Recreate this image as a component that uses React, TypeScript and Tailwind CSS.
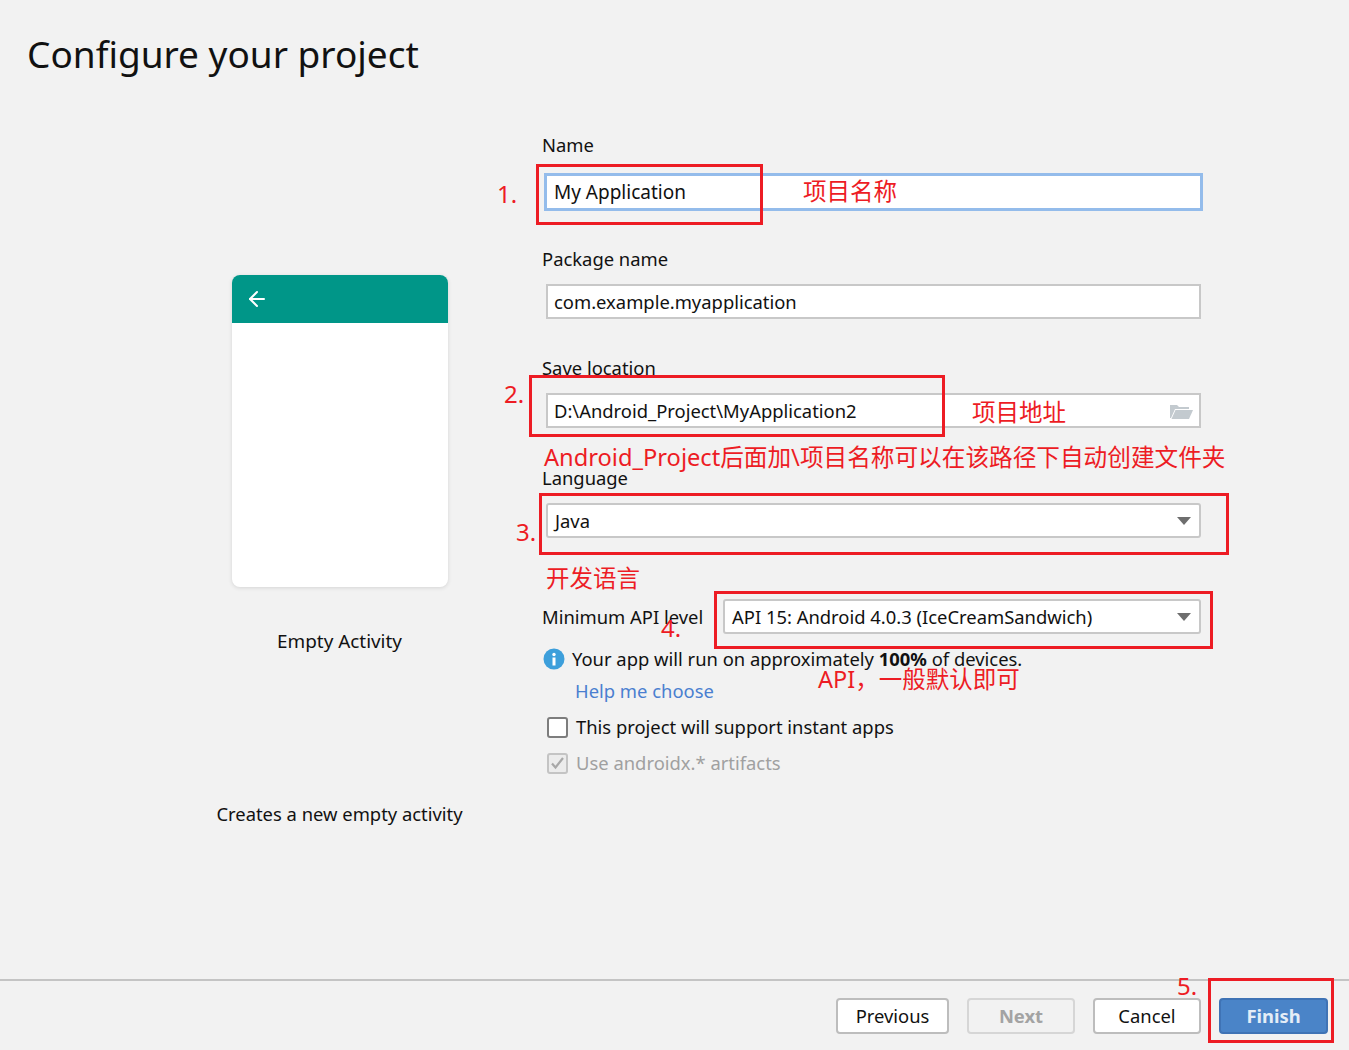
import { ArrowLeft } from 'lucide-react';

const uiFont = "font-['Noto_Sans','Open_Sans',sans-serif]";

function Label({ text, className = '' }: { text: string; className?: string }) {
  return <div className={`h-[26px] text-[18.4px] leading-[26px] text-[#111] ${className}`}>{text}</div>;
}

function Field({ value, children }: { value: string; children?: React.ReactNode }) {
  return (
    <div className="ml-1 flex h-[35px] w-[655px] items-center justify-between border-2 border-[#c8c8c8] bg-white pl-[6px] pr-[6px] text-[18.4px] text-[#111]">
      <span>{value}</span>
      {children}
    </div>
  );
}

function Caret() {
  return <div className="mr-[2px] h-0 w-0 border-x-[7px] border-t-[8px] border-x-transparent border-t-[#6e6e6e]" />;
}

function Select({ value, className = '' }: { value: string; className?: string }) {
  return (
    <div className={`flex h-[35px] items-center justify-between rounded-[3px] border-2 border-[#c8c8c8] bg-white pl-[7px] pr-[6px] text-[18.4px] text-[#111] ${className}`}>
      <span>{value}</span>
      <Caret />
    </div>
  );
}

function Button({ label, className = '' }: { label: string; className?: string }) {
  return (
    <div className={`flex h-[36px] items-center justify-center rounded-[4px] border-2 text-[18.4px] ${className}`}>
      {label}
    </div>
  );
}

function RedBox({ className }: { className: string }) {
  return <div className={`pointer-events-none absolute border-[3px] border-[#ed1c24] ${className}`} />;
}

function Note({ text, className }: { text: string; className: string }) {
  return (
    <div className={`pointer-events-none absolute whitespace-nowrap font-['Noto_Sans','Noto_Sans_CJK_SC',sans-serif] text-[#ed1c24] ${className}`}>
      {text}
    </div>
  );
}

export default function App() {
  return (
    <div className={`relative flex h-[1050px] w-[1349px] flex-col overflow-hidden bg-[#f2f2f2] ${uiFont}`}>
      <h1 className="ml-[27px] mt-[27px] mb-[1px] h-[54px] text-[37px] leading-[54px] text-[#111]">Configure your project</h1>

      <div className="flex flex-1">
        {/* Template preview */}
        <div className="ml-[215px] flex w-[249px] flex-col items-center pt-[193px] text-[18.4px] text-[#111]">
          <div className="h-[312px] w-[216px] overflow-hidden rounded-[8px] bg-white shadow-[0_1px_4px_rgba(0,0,0,0.12)]">
            <div className="flex h-[48px] items-center bg-[#009688] pl-[13px]">
              <ArrowLeft className="h-[24px] w-[24px] text-white" strokeWidth={2} />
            </div>
          </div>
          <div className="mt-[41px] text-[18.9px] leading-[26px]">Empty Activity</div>
          <div className="mt-[147px] whitespace-nowrap leading-[26px]">Creates a new empty activity</div>
        </div>

        {/* Form */}
        <div className="ml-[78px] flex flex-col pt-[50px]">
          <Label text="Name" />
          <div className="mt-[15px] ml-[2px] flex h-[38px] w-[659px] items-center border-[3px] border-[#94bceb] bg-white pl-[7px] text-[19px] text-[#111]">
            My Application
          </div>
          <Label text="Package name" className="mt-[35px]" />
          <div className="mt-[12px]">
            <Field value="com.example.myapplication" />
          </div>
          <Label text="Save location" className="mt-[36px]" />
          <div className="mt-[12px]">
            <Field value="D:\Android_Project\MyApplication2">
              <svg width="24" height="18" viewBox="0 0 24 18">
                <path d="M1 3h7l2 2h10v2H6L2 16H1z" fill="#c3cacf" />
                <path d="M6.5 8H24l-4 9H2.5z" fill="#c3cacf" />
              </svg>
            </Field>
          </div>
          <Label text="Language" className="mt-[37px]" />
          <div className="mt-[12px]">
            <Select value="Java" className="ml-1 w-[655px]" />
          </div>
          <div className="mt-[61px] flex items-center text-[18.4px] text-[#111]">
            <span className="w-[181px]">Minimum API level</span>
            <Select value="API 15: Android 4.0.3 (IceCreamSandwich)" className="w-[478px]" />
          </div>
          <div className="mt-[12px] flex h-[26px] items-center text-[18.4px] text-[#111]">
            <svg width="22" height="22" viewBox="0 0 22 22" className="mr-[7px] ml-[1px]">
              <circle cx="11" cy="11" r="10.5" fill="#3d9fdb" />
              <circle cx="11" cy="6.5" r="1.7" fill="#fff" />
              <rect x="9.5" y="9.5" width="3" height="8" fill="#fff" />
            </svg>
            <span>
              Your app will run on approximately <b className="font-bold">100%</b> of devices.
            </span>
          </div>
          <div className="mt-[6px] ml-[33px] h-[26px] text-[18.4px] leading-[26px] text-[#4a7fd0]">Help me choose</div>
          <div className="mt-[10px] flex h-[26px] items-center text-[18.4px] text-[#111]">
            <div className="ml-[5px] mr-[8px] h-[21px] w-[21px] rounded-[3px] border-2 border-[#7d7d7d] bg-white" />
            <span>This project will support instant apps</span>
          </div>
          <div className="mt-[10px] flex h-[26px] items-center text-[18.4px] text-[#a0a0a0]">
            <div className="ml-[5px] mr-[8px] flex h-[21px] w-[21px] items-center justify-center rounded-[3px] border-2 border-[#c4c4c4] bg-[#ececec]">
              <svg width="15" height="14" viewBox="0 0 15 14">
                <path d="M2 7.5l3.5 4L13 2" fill="none" stroke="#a8a8a8" strokeWidth="2.2" />
              </svg>
            </div>
            <span>Use androidx.* artifacts</span>
          </div>
        </div>
      </div>

      {/* Footer */}
      <div className="flex h-[71px] items-center justify-end gap-[18px] border-t-2 border-[#c4c4c4] pb-[1px] pr-[21px] pt-[2px]">
        <Button label="Previous" className="w-[113px] border-[#bdbdbd] bg-white text-[#111]" />
        <Button label="Next" className="w-[108px] border-[#d6d6d6] bg-[#f2f2f2] font-bold text-[#a3a3a3]" />
        <Button label="Cancel" className="w-[108px] border-[#bdbdbd] bg-white text-[#111]" />
        <Button label="Finish" className="w-[109px] border-[#3f73b5] bg-[#4a84c8] font-bold text-[#e4edf7]" />
      </div>

      {/* Red annotations drawn over the dialog */}
      <RedBox className="left-[536px] top-[164px] h-[61px] w-[227px]" />
      <RedBox className="left-[529px] top-[375px] h-[62px] w-[416px]" />
      <RedBox className="left-[539px] top-[493px] h-[62px] w-[690px]" />
      <RedBox className="left-[714px] top-[591px] h-[58px] w-[499px]" />
      <RedBox className="left-[1208px] top-[978px] h-[65px] w-[126px]" />

      <Note text="1." className="left-[497px] top-[176px] text-[24px] leading-[36px]" />
      <Note text="2." className="left-[504px] top-[376px] text-[24px] leading-[36px]" />
      <Note text="3." className="left-[516px] top-[514px] text-[24px] leading-[36px]" />
      <Note text="4." className="left-[661px] top-[610px] text-[24px] leading-[36px]" />
      <Note text="5." className="left-[1177px] top-[968px] text-[24px] leading-[36px]" />
      <Note text="项目名称" className="left-[803px] top-[174px] text-[23.5px] leading-[34px]" />
      <Note text="项目地址" className="left-[972px] top-[395px] text-[23.5px] leading-[34px]" />
      <Note text="Android_Project后面加\项目名称可以在该路径下自动创建文件夹" className="left-[544px] top-[440px] text-[23.65px] leading-[34px]" />
      <Note text="开发语言" className="left-[546px] top-[561px] text-[23.5px] leading-[34px]" />
      <Note text="API，一般默认即可" className="left-[818px] top-[662px] text-[23.5px] leading-[34px]" />
    </div>
  );
}
